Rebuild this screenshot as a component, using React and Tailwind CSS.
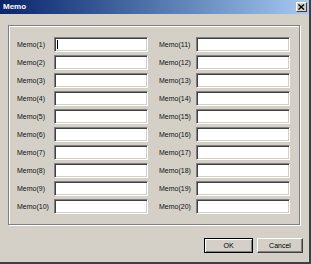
import React from "react";

const Field = ({ label, caret }) => (
  <div className="flex items-center h-[15px]">
    <span className="w-[38px] pl-[1px] text-[7px] text-[#111111] leading-none">{label}</span>
    <div className="w-[94px] h-[15px] bg-white flex items-center pl-[2px] border-t border-l border-t-[#808080] border-l-[#808080] border-b border-r border-b-[#ffffff] border-r-[#ffffff] shadow-[inset_1px_1px_0_#404040,inset_-1px_-1px_0_#d4d0c8]">
      {caret && <div className="w-[1px] h-[9px] bg-black" />}
    </div>
  </div>
);

const Button = ({ children, primary, w }) => (
  <button
    className={
      "h-[15px] text-[7px] text-black bg-[#d4d0c8] flex items-center justify-center leading-none " +
      w +
      (primary
        ? " border border-[#000000] shadow-[inset_1px_1px_0_#ffffff,inset_-1px_-1px_0_#808080]"
        : " border-t border-l border-t-[#ffffff] border-l-[#ffffff] border-b border-r border-b-[#404040] border-r-[#404040] shadow-[inset_-1px_-1px_0_#808080]")
    }
  >
    {children}
  </button>
);

export default function App() {
  const left = Array.from({ length: 10 }, (_, i) => `Memo(${i + 1})`);
  const right = Array.from({ length: 10 }, (_, i) => `Memo(${i + 11})`);

  return (
    <div
      className="w-[311px] h-[264px] bg-[#d4d0c8] flex flex-col border-r-2 border-b-2 border-r-[#404040] border-b-[#404040] overflow-hidden"
      style={{ fontFamily: '"Liberation Sans", Arial, sans-serif' }}
    >
      {/* Title bar */}
      <div className="h-[14px] flex items-center justify-between px-[3px] bg-gradient-to-r from-[#0a246a] to-[#a6caf0]">
        <span className="text-[8px] font-bold text-white leading-none">Memo</span>
        <div className="w-[11px] h-[10px] bg-[#d4d0c8] flex items-center justify-center border-t border-l border-t-white border-l-white border-b border-r border-b-[#404040] border-r-[#404040] mr-[-1px]">
          <svg width="7" height="6" viewBox="0 0 7 6">
            <path d="M0.5 0.5 L6 5.5 M6 0.5 L0.5 5.5" stroke="#000" strokeWidth="1.4" />
          </svg>
        </div>
      </div>

      {/* Group box */}
      <div className="ml-[8px] mt-[11px] w-[292px] h-[200px] border border-[#808080] shadow-[1px_1px_0_#ffffff,inset_1px_1px_0_#ffffff] pt-[11px] pl-[7px] flex gap-[10px]">
        <div className="flex flex-col gap-[3px]">
          {left.map((l, i) => (
            <Field key={l} label={l} caret={i === 0} />
          ))}
        </div>
        <div className="flex flex-col gap-[3px]">
          {right.map((l) => (
            <Field key={l} label={l} />
          ))}
        </div>
      </div>

      {/* Buttons */}
      <div className="flex justify-end gap-[4px] mt-[13px] pr-[6px]">
        <Button primary w="w-[49px]">OK</Button>
        <Button w="w-[46px]">Cancel</Button>
      </div>
    </div>
  );
}
